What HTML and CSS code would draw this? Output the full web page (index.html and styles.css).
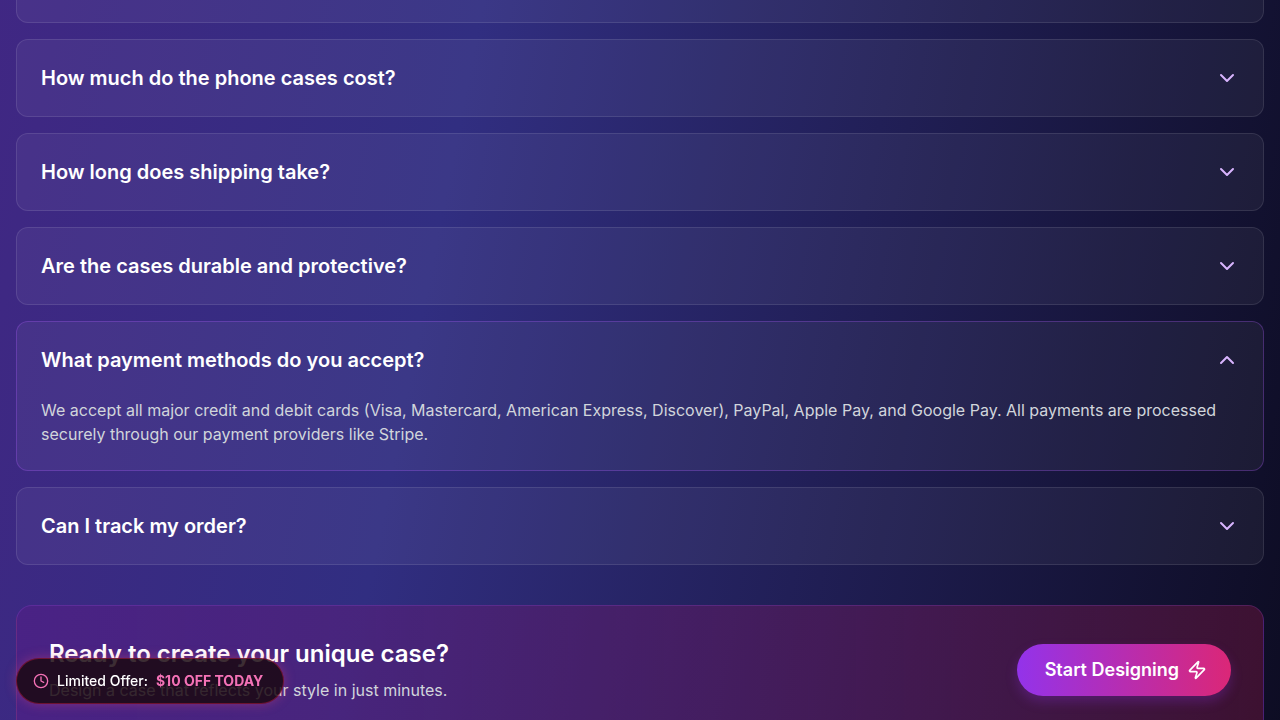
FILE: index.html
```html
<!DOCTYPE html>
<html lang="en">
<head>
    <meta charset="UTF-8">
    <meta name="viewport" content="width=device-width, initial-scale=1.0">
    <title>Phone Case FAQ</title>
    <link rel="stylesheet" href="styles.css">
</head>
<body>
    <main class="page">
        <section class="faq">
            <div class="faq-item faq-item-cut"></div>
            <div class="faq-item">
                <button class="question" type="button" aria-expanded="false">
                    How much do the phone cases cost?
                    <svg class="chevron" viewBox="0 0 24 24"><path d="m6 9 6 6 6-6"/></svg>
                </button>
            </div>
            <div class="faq-item">
                <button class="question" type="button" aria-expanded="false">
                    How long does shipping take?
                    <svg class="chevron" viewBox="0 0 24 24"><path d="m6 9 6 6 6-6"/></svg>
                </button>
            </div>
            <div class="faq-item">
                <button class="question" type="button" aria-expanded="false">
                    Are the cases durable and protective?
                    <svg class="chevron" viewBox="0 0 24 24"><path d="m6 9 6 6 6-6"/></svg>
                </button>
            </div>
            <div class="faq-item open">
                <button class="question" type="button" aria-expanded="true" aria-controls="payment-answer">
                    What payment methods do you accept?
                    <svg class="chevron" viewBox="0 0 24 24"><path d="m18 15-6-6-6 6"/></svg>
                </button>
                <p class="answer" id="payment-answer">We accept all major credit and debit cards (Visa, Mastercard, American Express, Discover), PayPal, Apple Pay, and Google Pay. All payments are processed securely through our payment providers like Stripe.</p>
            </div>
            <div class="faq-item">
                <button class="question" type="button" aria-expanded="false">
                    Can I track my order?
                    <svg class="chevron" viewBox="0 0 24 24"><path d="m6 9 6 6 6-6"/></svg>
                </button>
            </div>
        </section>

        <section class="cta">
            <div>
                <h2 class="cta-title">Ready to create your unique case?</h2>
                <p class="cta-text">Design a case that reflects your style in just minutes.</p>
            </div>
            <a class="cta-button" href="#">
                Start Designing
                <svg class="zap" viewBox="0 0 24 24"><path d="M4 14a1 1 0 0 1-.78-1.63l9.9-10.2a.5.5 0 0 1 .86.46l-1.92 6.02A1 1 0 0 0 13 10h7a1 1 0 0 1 .78 1.63l-9.9 10.2a.5.5 0 0 1-.86-.46l1.92-6.02A1 1 0 0 0 11 14z"/></svg>
            </a>
        </section>
    </main>

    <div class="offer">
        <svg class="clock" viewBox="0 0 24 24"><circle cx="12" cy="12" r="10"/><path d="M12 6v6l4 2"/></svg>
        <span>Limited Offer:</span>
        <strong class="offer-price">$10 OFF TODAY</strong>
    </div>
</body>
</html>
```
FILE: styles.css
```css
* {
    box-sizing: border-box;
}
body {
    margin: 0;
    height: 100vh;
    overflow: hidden;
    font-family: Inter, sans-serif;
    font-size: 16px;
    line-height: 24px;
    color: #ffffff;
    background: linear-gradient(101deg, #581c87 -55%, #312e81 34%, #000000 125%);
}
svg {
    flex-shrink: 0;
    fill: none;
    stroke: currentColor;
    stroke-width: 2;
    stroke-linecap: round;
    stroke-linejoin: round;
}
.page {
    padding: 0 16px;
}
.faq {
    display: flex;
    flex-direction: column;
    gap: 16px;
    margin-bottom: 40px;
}
.faq-item {
    border: 1px solid rgba(255, 255, 255, 0.1);
    border-radius: 12px;
    background-color: rgba(255, 255, 255, 0.05);
}
.faq-item-cut {
    height: 23px;
    border-top: none;
    border-radius: 0 0 12px 12px;
}
.faq-item.open {
    border-color: rgba(168, 85, 247, 0.3);
}
.question {
    display: flex;
    align-items: center;
    justify-content: space-between;
    width: 100%;
    padding: 24px;
    border: none;
    background: none;
    color: #ffffff;
    font-family: inherit;
    font-size: 20px;
    font-weight: 600;
    line-height: 28px;
    text-align: left;
    cursor: pointer;
}
.chevron {
    width: 24px;
    height: 24px;
    color: #d8b4fe;
}
.answer {
    margin: 0;
    padding: 0 24px 24px;
    color: #d1d5db;
}
.cta {
    display: flex;
    align-items: center;
    justify-content: space-between;
    padding: 32px;
    border: 1px solid rgba(168, 85, 247, 0.2);
    border-radius: 16px;
    background: linear-gradient(90deg, rgba(88, 28, 135, 0.5), rgba(131, 24, 67, 0.4));
}
.cta-title {
    margin: 0 0 8px;
    font-size: 24px;
    font-weight: 600;
    line-height: 32px;
}
.cta-text {
    margin: 0;
    color: #d1d5db;
}
.cta-button {
    display: flex;
    align-items: center;
    gap: 8px;
    padding: 12px 24px 12px 28px;
    border-radius: 26px;
    background: linear-gradient(90deg, #9333ea, #db2777);
    box-shadow: 0 6px 12px rgba(147, 51, 234, 0.25);
    color: #ffffff;
    font-size: 18px;
    font-weight: 600;
    line-height: 28px;
    text-decoration: none;
}
.zap {
    width: 20px;
    height: 20px;
}
.offer {
    position: fixed;
    left: 16px;
    bottom: 16px;
    display: flex;
    align-items: center;
    gap: 8px;
    padding: 12px 20px 12px 16px;
    border: 1px solid rgba(225, 29, 72, 0.4);
    border-radius: 23px;
    background-color: rgba(26, 8, 16, 0.85);
    box-shadow: 0 0 12px rgba(236, 72, 120, 0.35);
    font-size: 14px;
    font-weight: 500;
    line-height: 20px;
}
.clock {
    width: 16px;
    height: 16px;
    color: #f472b6;
}
.offer-price {
    color: #f472b6;
    font-weight: 700;
}
```
